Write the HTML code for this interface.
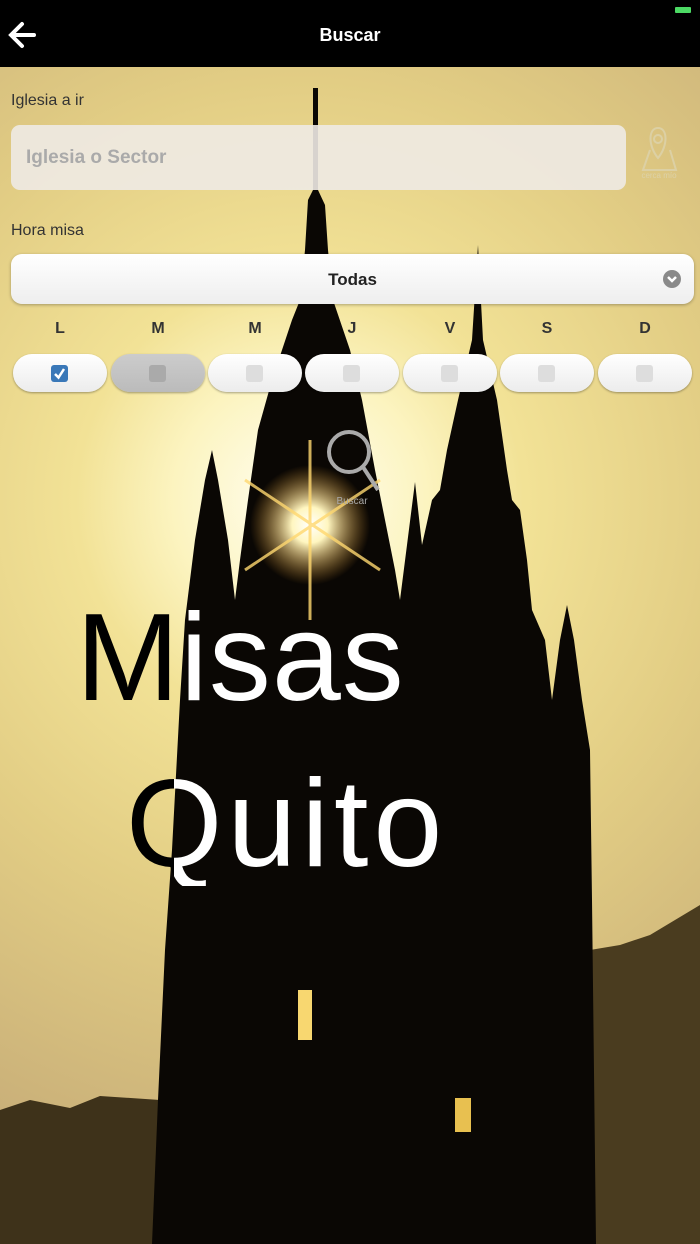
<!DOCTYPE html>
<html><head><meta charset="utf-8"><style>
*{margin:0;padding:0;box-sizing:border-box}
body{width:700px;height:1244px;overflow:hidden;position:relative;font-family:"Liberation Sans",sans-serif;background:#d8c77e}
#bg{position:absolute;left:0;top:0}
.top{position:absolute;left:0;top:0;width:700px;height:67px;background:#000}
.title{position:absolute;top:25px;width:700px;text-align:center;color:#fff;font-weight:bold;font-size:18px}
.lbl{position:absolute;left:11px;color:#333;font-size:16px}
.inp{position:absolute;left:11px;top:125px;width:615px;height:65px;background:rgba(238,234,228,0.9);border-radius:9px;color:#aaa;font-weight:bold;font-size:19px;padding:22px 0 0 15px}
.sel{position:absolute;left:11px;top:254px;width:683px;height:50px;border-radius:11px;background:linear-gradient(#fff,#eee);box-shadow:0 1px 3px rgba(0,0,0,.3);text-align:center;font-weight:bold;font-size:17px;color:#222;padding-top:16px}
.chev{position:absolute;right:13px;top:16px;width:18px;height:18px;border-radius:50%;background:#8a8a8a}
.day{position:absolute;top:320px;width:30px;margin-left:-15px;text-align:center;font-weight:bold;font-size:16px;color:#333}
.btn{position:absolute;top:354px;width:94px;margin-left:-47px;height:38px;border-radius:19px;background:linear-gradient(#fff,#ececec);box-shadow:0 1px 2px rgba(0,0,0,.35)}
.btn i{position:absolute;left:38px;top:11px;width:17px;height:17px;border-radius:3px;background:#ddd}
.logo{position:absolute;font-size:124px;line-height:1;font-weight:normal;-webkit-background-clip:text;background-clip:text;color:transparent}
</style></head><body>
<svg id="bg" width="700" height="1244" viewBox="0 0 700 1244">
<defs>
<radialGradient id="sky" cx="300" cy="500" r="700" gradientUnits="userSpaceOnUse">
<stop offset="0" stop-color="#fffef2"/><stop offset="0.18" stop-color="#fcf4c0"/><stop offset="0.32" stop-color="#f2e296"/><stop offset="0.6" stop-color="#e2cd84"/><stop offset="1" stop-color="#c8ae78"/></radialGradient>
<radialGradient id="sun" cx="310" cy="525" r="60" gradientUnits="userSpaceOnUse"><stop offset="0" stop-color="#fff"/><stop offset=".3" stop-color="#fff6c0"/><stop offset="1" stop-color="#d08a20" stop-opacity="0"/></radialGradient>
</defs>
<rect width="700" height="1244" fill="url(#sky)"/>
<path d="M0 1110 L30 1100 L70 1108 L100 1096 L160 1100 L160 1244 L0 1244Z" fill="#3e321a"/>
<path d="M590 950 L620 945 L650 935 L700 905 L700 1244 L590 1244Z" fill="#4a3c1f"/>
<path fill="#0a0704" d="M313 88 L318 88 L318 190 L325 205 L328 250 L333 300 L350 350 L362 400 L375 470 L385 520 L395 570 L400 600 L407 545 L415 482 L422 545 L432 500 L440 490 L447 450 L458 400 L472 340 L478 245 L483 340 L497 400 L507 470 L512 500 L520 510 L527 560 L532 610 L545 640 L552 700 L560 640 L567 605 L574 640 L582 700 L590 750 L592 900 L596 1244 L152 1244 L158 1100 L165 950 L172 850 L180 700 L185 620 L195 540 L205 480 L212 450 L218 480 L228 540 L235 600 L240 560 L248 500 L258 430 L272 380 L292 320 L300 300 L305 250 L308 200 L313 190Z"/>
<rect x="298" y="990" width="14" height="50" fill="#f8d770"/>
<rect x="455" y="1098" width="16" height="34" fill="#e8c050"/>
<circle cx="310" cy="525" r="60" fill="url(#sun)"/>
<g stroke="#ffd870" stroke-width="3" opacity=".8"><line x1="310" y1="440" x2="310" y2="620"/><line x1="245" y1="480" x2="380" y2="570"/><line x1="245" y1="570" x2="380" y2="480"/></g>
<g stroke="#aaa" stroke-width="4" fill="none"><circle cx="349" cy="452" r="20"/><line x1="363" y1="467" x2="378" y2="490"/></g>
<text x="352" y="504" font-size="10" fill="#aaa" text-anchor="middle" font-family="Liberation Sans">Buscar</text>
<g stroke="#ddd2a8" stroke-width="2" fill="none" opacity=".9"><path d="M658 158 C648 146 648 128 658 128 C668 128 668 146 658 158Z"/><circle cx="658" cy="139" r="4"/><path d="M650 150 L643 170 L676 170 L670 150"/></g>
<text x="659" y="178" font-size="8" fill="#ddd2a8" text-anchor="middle" font-family="Liberation Sans">cerca mío</text>
</svg>
<div class="top"><svg width="40" height="40" style="position:absolute;left:4px;top:15px"><path d="M30 20 H8 M18 9 L7 20 L18 31" stroke="#fff" stroke-width="4" fill="none" stroke-linecap="round"/></svg>
<div class="title">Buscar</div>
<div style="position:absolute;left:675px;top:7px;width:16px;height:6px;background:#4cd964;border-radius:1px"></div></div>
<div class="lbl" style="top:92px">Iglesia a ir</div>
<div class="inp">Iglesia o Sector</div>
<div class="lbl" style="top:222px">Hora misa</div>
<div class="sel">Todas<div class="chev"><svg width="18" height="18"><path d="M5 7 L9 11 L13 7" stroke="#fff" stroke-width="2.5" fill="none"/></svg></div></div>
<div class="day" style="left:60px">L</div><div class="day" style="left:158px">M</div><div class="day" style="left:255px">M</div><div class="day" style="left:352px">J</div><div class="day" style="left:450px">V</div><div class="day" style="left:547px">S</div><div class="day" style="left:645px">D</div>
<div class="btn" style="left:60px"><i style="background:#3a78b8"><svg width="17" height="17"><path d="M4 9 L7.5 12.5 L13 4" stroke="#fff" stroke-width="2.5" fill="none"/></svg></i></div>
<div class="btn" style="left:158px;background:linear-gradient(#ccc,#bbb)"><i style="background:#aaa"></i></div>
<div class="btn" style="left:255px"><i></i></div>
<div class="btn" style="left:352px"><i></i></div>
<div class="btn" style="left:450px"><i></i></div>
<div class="btn" style="left:547px"><i></i></div>
<div class="btn" style="left:645px"><i></i></div>
<div class="logo" style="left:76px;top:596px;letter-spacing:1px;background-image:linear-gradient(90deg,#000 0,#000 95px,#fff 95px)">Misas</div>
<div class="logo" style="left:126px;top:762px;letter-spacing:5px;background-image:linear-gradient(90deg,#000 0,#000 48px,#fff 48px)">Quito</div>
</body></html>
